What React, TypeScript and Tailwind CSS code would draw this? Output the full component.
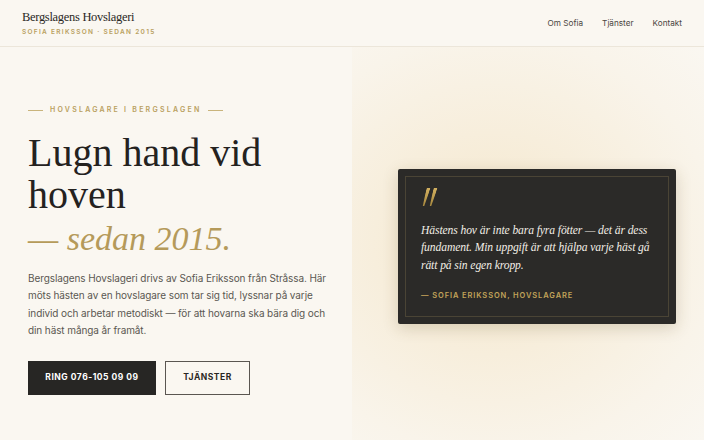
const serif = "font-['Liberation_Serif','DejaVu_Serif',serif]";
const sans = "font-['Inter','Liberation_Sans',sans-serif]";

const navLinks = ["Om Sofia", "Tjänster", "Kontakt"];

const Header = () => (
  <header className="h-[47px] border-b border-[#ece6da] bg-[#faf7f1] flex items-center justify-between pl-[22px] pr-[22px]">
    <div className="flex flex-col">
      <span className={`${serif} text-[12.5px] leading-[16px] text-[#2a2724] tracking-[-0.3px]`}>
        Bergslagens Hovslageri
      </span>
      <span className={`${sans} text-[6.5px] leading-[10px] mt-[2px] font-semibold tracking-[0.2em] text-[#b9a060]`}>
        SOFIA ERIKSSON · SEDAN 2015
      </span>
    </div>
    <nav className={`${sans} flex gap-[19px] text-[8.2px] text-[#4a4641]`}>
      {navLinks.map((link) => (
        <a key={link} href="#" className="hover:text-black">
          {link}
        </a>
      ))}
    </nav>
  </header>
);

const Hero = () => (
  <div className="pl-[28px] pr-[26px] pt-[58px]">
    {/* eyebrow */}
    <div className="flex items-center gap-[7px]">
      <span className="w-[15px] h-px bg-[#c9b47c]" />
      <span className={`${sans} text-[7px] font-semibold tracking-[0.32em] text-[#b9a060]`}>
        HOVSLAGARE I BERGSLAGEN
      </span>
      <span className="w-[15px] h-px bg-[#c9b47c]" />
    </div>

    <h1 className={`${serif} mt-[16px] text-[40px] leading-[42px] text-[#24221f]`}>
      Lugn hand vid
      <br />
      hoven
      <br />
      <em className="text-[34px] text-[#b59a5a]">— sedan 2015.</em>
    </h1>

    <p className={`${sans} mt-[10px] text-[10px] leading-[17.5px] tracking-[-0.1px] text-[#5b5751]`}>
      Bergslagens Hovslageri drivs av Sofia Eriksson från Stråssa. Här möts hästen av en
      hovslagare som tar sig tid, lyssnar på varje individ och arbetar metodiskt — för att
      hovarna ska bära dig och din häst många år framåt.
    </p>

    <div className={`${sans} mt-[21px] flex gap-[9px]`}>
      <button className="h-[34px] w-[128px] bg-[#272624] text-white text-[8.5px] font-bold tracking-[0.06em]">
        RING 076-105 09 09
      </button>
      <button className="h-[34px] w-[85px] border border-[#5a5651] text-[#2a2724] text-[8.5px] font-bold tracking-[0.06em]">
        TJÄNSTER
      </button>
    </div>
  </div>
);

// decorative quote mark: two tapered, slanted gold strokes
const QuoteMark = () => (
  <div aria-hidden className="h-[34px] flex items-start gap-[2.5px] pl-[3px]">
    <span className="w-[4px] h-[18px] -skew-x-[16deg] bg-gradient-to-b from-[#d2b060] to-[#a8893e] [clip-path:polygon(0_0,100%_0,70%_100%,35%_100%)]" />
    <span className="w-[4px] h-[18px] -skew-x-[16deg] bg-gradient-to-b from-[#d2b060] to-[#a8893e] [clip-path:polygon(0_0,100%_0,70%_100%,35%_100%)]" />
  </div>
);

const QuoteCard = () => (
  <div className="w-[278px] rounded-[2px] bg-[#2b2a28] p-[7px] shadow-[0_4px_16px_rgba(90,70,25,0.2)]">
    <div className="border border-[#4a4435] pl-[15px] pr-[12px] pt-[11px] pb-[15px]">
      <QuoteMark />
      <p className={`${serif} italic text-[11.6px] leading-[17.5px] tracking-[-0.1px] text-[#f2eee6]`}>
        Hästens hov är inte bara fyra fötter — det är dess fundament. Min uppgift är att hjälpa
        varje häst gå rätt på sin egen kropp.
      </p>
      <p className={`${sans} mt-[17px] text-[7.5px] leading-[10px] font-semibold tracking-[0.12em] text-[#c2a45a]`}>
        — SOFIA ERIKSSON, HOVSLAGARE
      </p>
    </div>
  </div>
);

export default function App() {
  return (
    <div className="w-[704px] h-[440px] overflow-hidden bg-[#faf7f1] flex flex-col">
      <Header />
      <main className="flex flex-1">
        <section className="w-[352px]">
          <Hero />
        </section>
        <section className="flex-1 flex items-center justify-center pl-[18px] pt-[6px] bg-[radial-gradient(ellipse_at_40%_50%,#f4e7cb_0%,#f7eedc_40%,#f9f4ea_75%,#faf7f1_100%)]">
          <QuoteCard />
        </section>
      </main>
    </div>
  );
}
